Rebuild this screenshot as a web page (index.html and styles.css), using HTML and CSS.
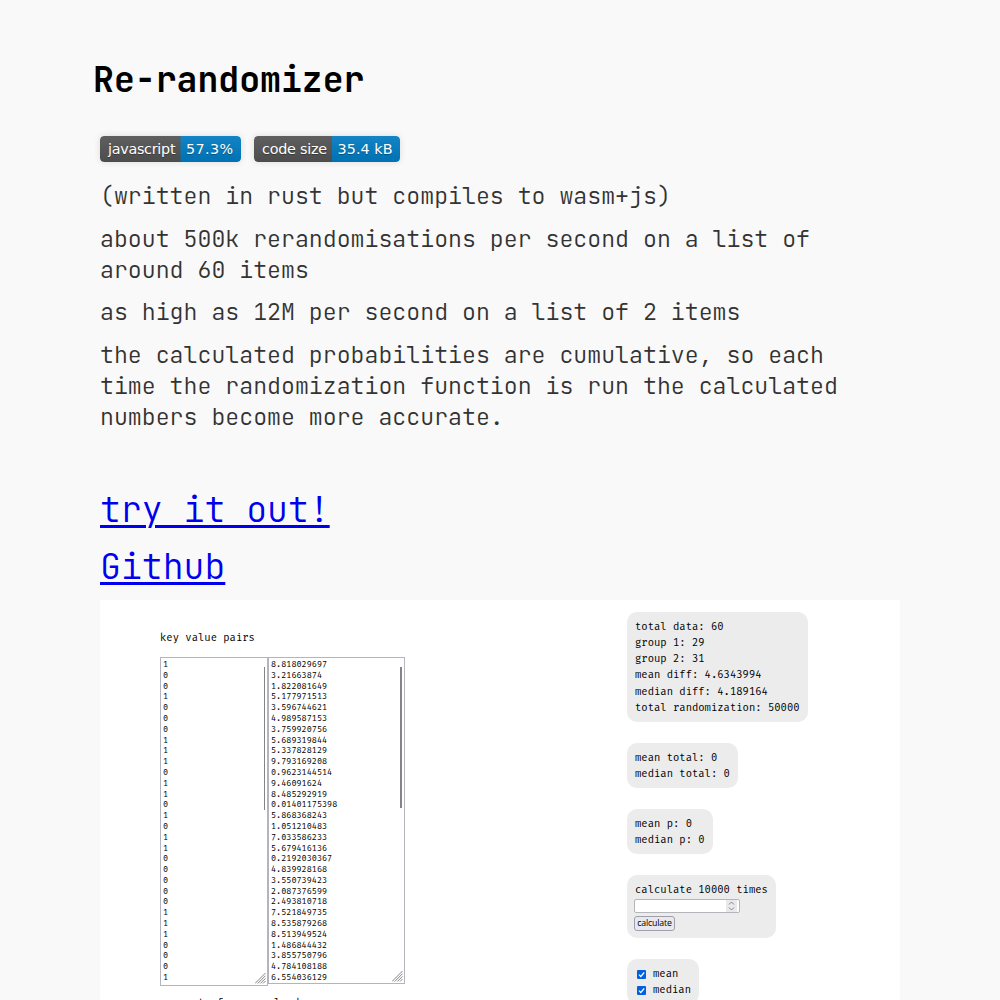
FILE: index.html
```html
<!DOCTYPE html>
<html lang="en">
<head>
<meta charset="utf-8">
<title>Re-randomizer</title>
<link rel="stylesheet" href="styles.css">
</head>
<body>
<main class="page">
  <h1 class="title">Re-randomizer</h1>
  <div class="badges">
    <svg class="badge" width="141" height="26" viewBox="0 0 141 26">
      <defs>
        <linearGradient id="shine" x2="0" y2="1"><stop offset="0" stop-color="#bbb" stop-opacity=".1"/><stop offset="1" stop-opacity=".1"/></linearGradient>
        <clipPath id="round1"><rect width="141" height="26" rx="4"/></clipPath>
      </defs>
      <g clip-path="url(#round1)"><rect width="81" height="26" fill="#555"/><rect x="80.5" width="61" height="26" fill="#007ec6"/><rect width="141" height="26" fill="url(#shine)"/></g>
      <g class="badge-shadow"><text x="8" y="19.3" textLength="67.5">javascript</text><text x="86" y="19.3" textLength="47">57.3%</text></g>
      <g class="badge-text"><text x="8" y="18" textLength="67.5">javascript</text><text x="86" y="18" textLength="47">57.3%</text></g>
    </svg>
    <svg class="badge" width="146" height="26" viewBox="0 0 146 26">
      <defs><clipPath id="round2"><rect width="146" height="26" rx="4"/></clipPath></defs>
      <g clip-path="url(#round2)"><rect width="79" height="26" fill="#555"/><rect x="78" width="68" height="26" fill="#007ec6"/><rect width="146" height="26" fill="url(#shine)"/></g>
      <g class="badge-shadow"><text x="8" y="19.3" textLength="65">code size</text><text x="83.5" y="19.3" textLength="55">35.4 kB</text></g>
      <g class="badge-text"><text x="8" y="18" textLength="65">code size</text><text x="83.5" y="18" textLength="55">35.4 kB</text></g>
    </svg>
  </div>
  <div class="copy">
    <p>(written in rust but compiles to wasm+js)</p>
    <p>about 500k rerandomisations per second on a list of around 60 items</p>
    <p>as high as 12M per second on a list of 2 items</p>
    <p>the calculated probabilities are cumulative, so each time the randomization function is run the calculated numbers become more accurate.</p>
  </div>
  <nav class="links">
    <a href="#">try it out!</a>
    <a href="#">Github</a>
  </nav>
  <section class="demo">
    <div class="inputs">
      <div class="label">key value pairs</div>
      <div class="areas">
        <div class="area keys">
<pre>1
0
0
1
0
0
0
1
1
1
0
1
1
0
1
0
1
1
0
0
0
0
0
1
1
1
0
0
0
1</pre>
          <i class="bar"></i>
          <svg class="grip" width="11" height="11" viewBox="0 0 11 11"><path d="M0 10.5 10.5 0M2.7 10.5l7.8-7.8M5.4 10.5l5.1-5.1M8 10.5 10.5 8"/></svg>
        </div>
        <div class="area values">
<pre>8.818029697
3.21663874
1.822081649
5.177971513
3.596744621
4.989587153
3.759920756
5.689319844
5.337828129
9.793169208
0.9623144514
9.46091624
8.485292919
0.01401175398
5.868368243
1.051210483
7.033586233
5.679416136
0.2192030367
4.839928168
3.550739423
2.087376599
2.493810718
7.521849735
8.535879268
8.513949524
1.486844432
3.855750796
4.784108188
6.554036129</pre>
          <i class="bar"></i>
          <svg class="grip" width="11" height="11" viewBox="0 0 11 11"><path d="M0 10.5 10.5 0M2.7 10.5l7.8-7.8M5.4 10.5l5.1-5.1M8 10.5 10.5 8"/></svg>
        </div>
      </div>
      <div class="label next">percent of mean valued</div>
    </div>
    <div class="results">
      <div class="card">total data: 60<br>group 1: 29<br>group 2: 31<br>mean diff: 4.6343994<br>median diff: 4.189164<br>total randomization: 50000</div>
      <div class="card">mean total: 0<br>median total: 0</div>
      <div class="card">mean p: 0<br>median p: 0</div>
      <div class="card calc">calculate 10000 times
        <div class="number"><svg width="11" height="12" viewBox="0 0 11 12"><path d="M3 4.5 5.5 2 8 4.5M3 7.5 5.5 10 8 7.5"/></svg></div>
        <div class="button">calculate</div>
      </div>
      <div class="card checks">
        <div class="check"><svg width="9" height="9" viewBox="0 0 9 9"><rect width="9" height="9" rx="1"/><path d="M2 4.7 3.8 6.5 7.2 2.5"/></svg>mean</div>
        <div class="check"><svg width="9" height="9" viewBox="0 0 9 9"><rect width="9" height="9" rx="1"/><path d="M2 4.7 3.8 6.5 7.2 2.5"/></svg>median</div>
      </div>
    </div>
  </section>
</main>
</body>
</html>
```
FILE: styles.css
```css
* { box-sizing: border-box; }
html, body { height: 100%; }
body { margin: 0; overflow: hidden; background: #f9f9f9; color: #333; font-family: "JetBrains Mono", "DejaVu Sans Mono", monospace; }
.page { width: 800px; height: 1000px; margin: 0 auto; padding-top: 57px; }
.title { margin: 0 0 0 -7px; height: 79px; line-height: 46px; font-size: 34.8px; font-weight: 600; color: #000; }
.badges { display: flex; gap: 13px; height: 26px; }
.badge { border-radius: 4px; box-shadow: 0 0 7px rgba(0,0,0,.12); font-family: Verdana, "DejaVu Sans", sans-serif; font-size: 14.3px; }
.badge-shadow { fill: #010101; opacity: .3; }
.badge-text { fill: #fff; }
.copy { width: 780px; padding-top: 18.2px; font-size: 23.21px; font-weight: 300; line-height: 31px; }
.copy p { margin: 0 0 11.6px; }
.links { display: flex; flex-direction: column; align-items: flex-start; gap: 11px; padding-top: 43px; height: 156.4px; font-size: 34.8px; font-weight: 300; line-height: 46px; }
.links a { color: #00e; text-underline-offset: 3px; text-decoration-thickness: 3px; }
.demo { display: flex; height: 400px; overflow: hidden; background: #fff; color: #000; font-family: "Fira Mono", "Fira Code", "DejaVu Sans Mono", monospace; font-size: 10.56px; line-height: 16.2px; }
.inputs { width: 527px; padding: 30.5px 0 0 60px; }
.label { height: 26.5px; }
.next { margin-top: 9.5px; white-space: nowrap; }
.areas { display: flex; align-items: flex-start; }
.area { position: relative; border: 1px solid #b4b4be; background: #fff; }
.area pre { margin: 0; padding: 1px 2px; font: 8.5px/10.8px "Fira Mono", "Fira Code", "DejaVu Sans Mono", monospace; }
.keys { width: 108px; height: 329px; }
.values { width: 137px; height: 327px; }
.bar { position: absolute; right: 2px; top: 9px; width: 2px; height: 141px; background: #858585; }
.keys .bar { width: 1.4px; height: 143px; }
.grip { position: absolute; right: 1px; bottom: 1px; fill: none; stroke: #666; stroke-width: .8; }
.results { display: flex; flex-direction: column; align-items: flex-start; gap: 21.1px; padding-top: 12px; }
.card { flex: none; padding: 6.8px 8px 5.8px; border-radius: 10px; background: #ececec; white-space: nowrap; }
.calc { height: 63px; }
.number { display: flex; justify-content: flex-end; width: 106px; height: 14px; margin: 1.4px 0 2.4px -1px; padding-right: 2px; border: 1px solid #b5b5bb; border-radius: 2px; background: #fff; }
.number svg { background: #e9e9ed; fill: none; stroke: #888; }
.button { width: 41px; height: 15px; margin-left: -1px; border: 1px solid #a0a0ad; border-radius: 3px; background: #e9e9ed; font: 8.8px/13px "Open Sans", sans-serif; letter-spacing: -.2px; text-align: center; }
.check { display: flex; align-items: center; gap: 7px; padding-left: 2px; }
.check svg { fill: #0060df; }
.check path { fill: none; stroke: #fff; stroke-width: 1.2; }
```
